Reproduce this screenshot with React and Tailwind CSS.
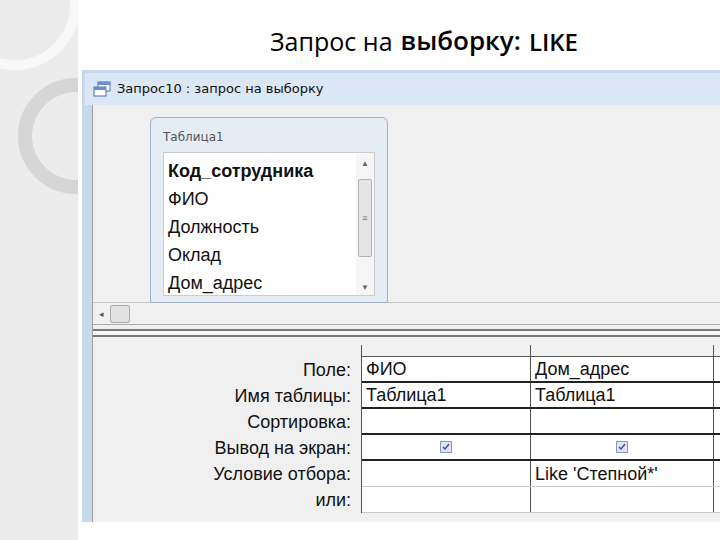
import React from "react";

const rows = [
  { label: "Поле:", a: "ФИО", b: "Дом_адрес" },
  { label: "Имя таблицы:", a: "Таблица1", b: "Таблица1" },
  { label: "Сортировка:", a: "", b: "" },
  { label: "Вывод на экран:", check: true },
  { label: "Условие отбора:", a: "", b: "Like 'Степной*'" },
  { label: "или:", a: "", b: "" },
];

const Check = () => (
  <span className="inline-flex w-[12px] h-[12px] border border-[#8a9bb8] bg-[#dde4f4] items-center justify-center">
    <svg width="8" height="8" viewBox="0 0 8 8">
      <path d="M1 4 L3 6 L7 1" stroke="#3a4fa0" strokeWidth="1.4" fill="none" />
    </svg>
  </span>
);

const App = () => {
  const sans = { fontFamily: "Tahoma, 'DejaVu Sans', 'Liberation Sans', sans-serif" };
  const grid = { fontFamily: "'Liberation Sans', Arial, sans-serif" };
  return (
    <div className="w-[720px] h-[540px] bg-white flex overflow-hidden" style={{ fontFamily: "'Open Sans', 'Liberation Sans', sans-serif" }}>
      {/* decorative strip */}
      <div className="w-[78px] shrink-0 bg-[#ececec] relative overflow-hidden">
        <div className="absolute left-[-50px] top-[-60px] w-[130px] h-[130px] rounded-full border-[10px] border-[#f8f8f8]" />
        <div className="absolute left-[18px] top-[78px] w-[116px] h-[116px] rounded-full border-[14px] border-[#d6d6d6]" />
      </div>
      <div className="flex-1 flex flex-col">
        <div className="h-[70px] flex items-end justify-center pb-[10px] pl-[50px] text-[25px] text-black">
          Запрос на <span className="ml-[8px] font-semibold text-[26px]">выборку:</span>
          <span className="ml-[8px] font-semibold text-[24px]">LIKE</span>
        </div>
        <div className="ml-[4px] h-[452px] bg-[#c6d9ef] pl-[3px] pt-[3px] flex flex-col">
          <div className="h-[32px] flex items-center gap-[6px] px-[8px] bg-[#dbe7f5] text-[13px] text-[#111]" style={sans}>
            <svg width="18" height="16" viewBox="0 0 18 16">
              <rect x="5" y="1" width="12" height="9" fill="#fff" stroke="#4a6fb0" />
              <rect x="5" y="1" width="12" height="3" fill="#6a8fd0" />
              <rect x="1" y="6" width="12" height="9" fill="#fff" stroke="#4a6fb0" />
              <rect x="1" y="6" width="12" height="3" fill="#6a8fd0" />
            </svg>
            Запрос10 : запрос на выборку
          </div>
          <div className="flex-1 bg-[#f0f0f0] ml-[7px] flex flex-col border-l border-[#a0a0a0]">
            <div className="h-[198px] relative border-b border-[#c8c8c8]">
              <div className="absolute left-[57px] top-[12px] w-[238px] h-[186px] rounded-t-[6px] border border-[#9fb0c8] bg-[#e6ecf4] px-[12px] pt-[10px]">
                <div className="text-[12px] text-[#555]" style={sans}>Таблица1</div>
                <div className="mt-[6px] bg-white border border-[#ccc] flex h-[144px]">
                  <div className="flex-1 pl-[4px] pt-[4px] text-[18px] leading-[28px] text-[#111]" style={grid}>
                    <div className="font-bold">Код_сотрудника</div>
                    <div>ФИО</div>
                    <div>Должность</div>
                    <div>Оклад</div>
                    <div>Дом_адрес</div>
                  </div>
                  <div className="w-[18px] flex flex-col items-center bg-[#f6f6f6]">
                    <span className="text-[8px] text-[#666] mt-[4px]">▲</span>
                    <div className="mt-[10px] w-[14px] h-[78px] rounded-[2px] border border-[#b5b5b5] bg-[#e4e4e4] flex items-center justify-center text-[9px] text-[#777]">≡</div>
                    <span className="text-[8px] text-[#666] mt-auto mb-[2px]">▼</span>
                  </div>
                </div>
              </div>
            </div>
            <div className="h-[22px] flex items-center gap-[6px] px-[6px] border-b border-[#aaa]">
              <span className="text-[9px] text-[#555]">◂</span>
              <div className="w-[20px] h-[18px] rounded-[2px] border border-[#aaa] bg-[#e2e2e2]" />
            </div>
            <div className="h-[8px] border-y-[2px] border-[#777] bg-[#f6f6f6] mt-[4px]" />
            <div className="flex pt-[8px]">
              <div className="w-[268px] flex flex-col items-end pr-[10px] pt-[12px] text-[18px] leading-[26px] text-[#111]" style={grid}>
                {rows.map((r) => (
                  <div key={r.label} className="h-[26px]">{r.label}</div>
                ))}
              </div>
              <div className="flex-1 border-l border-[#555] text-[18px] text-[#111]" style={grid}>
                <div className="flex h-[12px] border-b border-[#555] bg-[#f2f2f2]">
                  <div className="w-[169px] border-r border-[#555]" />
                  <div className="w-[183px] border-r border-[#555]" />
                </div>
                {rows.map((r, i) => (
                  <div key={r.label} className={`flex h-[26px] bg-white ${i < 4 ? "border-b-2 border-[#222]" : "border-b border-[#ccc]"}`}>
                    <div className="w-[169px] border-r border-[#555] px-[4px] leading-[24px] flex items-center">
                      {r.check ? <div className="w-full flex justify-center"><Check /></div> : r.a}
                    </div>
                    <div className="w-[183px] border-r border-[#555] px-[4px] leading-[24px] flex items-center">
                      {r.check ? <div className="w-full flex justify-center"><Check /></div> : r.b}
                    </div>
                  </div>
                ))}
              </div>
            </div>
          </div>
        </div>
      </div>
    </div>
  );
};

export default App;
